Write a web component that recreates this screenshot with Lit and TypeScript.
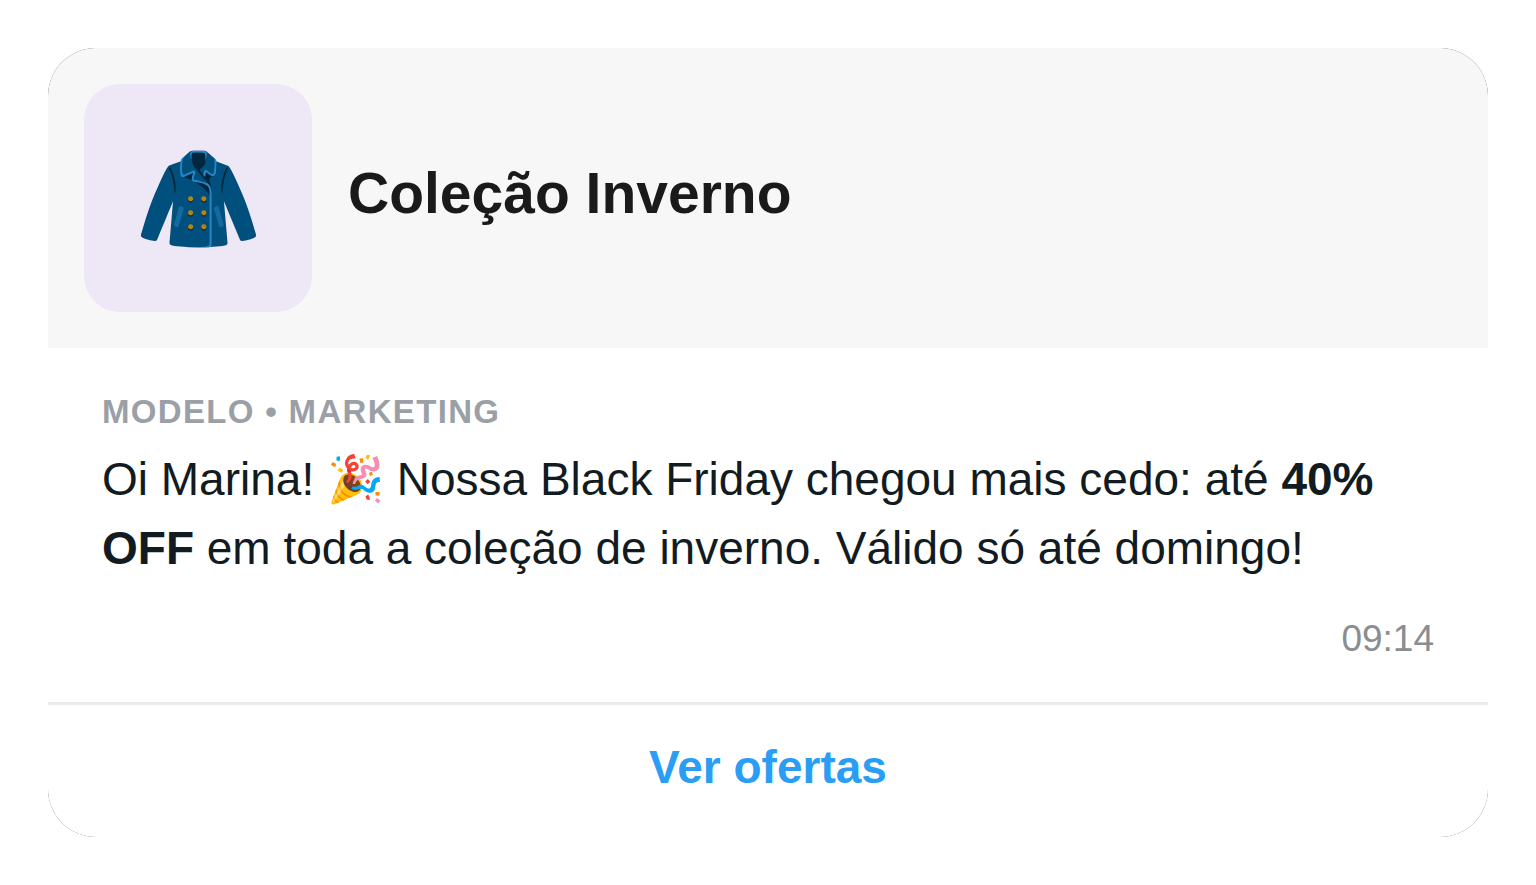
import { LitElement, html, css } from "lit";
import { customElement } from "lit/decorators.js";

@customElement("app-root")
export class AppRoot extends LitElement {
  static styles = css`
    :host {
      display: block;
      padding: 48px;
      background: #ffffff;
      font-family: "Liberation Sans", Arial, sans-serif;
      color: #111b21;
    }
    /* The dark base shows only as a hairline along the rounded corners. */
    .card {
      border-radius: 48px;
      background: #444444;
      overflow: hidden;
    }
    .header {
      display: flex;
      align-items: center;
      gap: 36px;
      padding: 36px;
      background: #f7f7f7;
    }
    .thumb {
      display: grid;
      place-items: center;
      flex: none;
      box-sizing: border-box;
      width: 228px;
      height: 228px;
      padding-top: 2px;
      border-radius: 36px;
      background: #ede7f6;
      font-size: 102px;
      line-height: 1;
    }
    .title {
      margin: 0 0 10px;
      font-size: 57px;
      line-height: 68px;
      color: #1a1a1a;
    }
    .body {
      padding: 42px 54px 41px;
      background: #ffffff;
    }
    .label {
      margin: 0;
      font-size: 33px;
      line-height: 44px;
      font-weight: 700;
      letter-spacing: 0.04em;
      text-transform: uppercase;
      color: #9aa0a6;
    }
    .message {
      margin: 11px 0 0;
      font-size: 46px;
      line-height: 69px;
    }
    .time {
      display: block;
      margin-top: 34px;
      text-align: right;
      font-size: 37px;
      line-height: 44px;
      color: #8a8d91;
    }
    .action {
      display: block;
      width: 100%;
      border: 0;
      border-top: 3px solid #ebebeb;
      padding: 32px 36px 40px;
      background: #ffffff;
      font: 700 46px/60px "Liberation Sans", Arial, sans-serif;
      color: #2a9df4;
      cursor: pointer;
    }
  `;

  render() {
    return html`
      <article class="card">
        <header class="header">
          <div class="thumb" aria-hidden="true">🧥</div>
          <h1 class="title">Coleção Inverno</h1>
        </header>
        <div class="body">
          <p class="label">Modelo • Marketing</p>
          <p class="message">
            Oi Marina! 🎉 Nossa Black Friday chegou mais cedo: até
            <strong>40% OFF</strong> em toda a coleção de inverno. Válido só até
            domingo!
          </p>
          <time class="time" datetime="09:14">09:14</time>
        </div>
        <button class="action" type="button">Ver ofertas</button>
      </article>
    `;
  }
}
